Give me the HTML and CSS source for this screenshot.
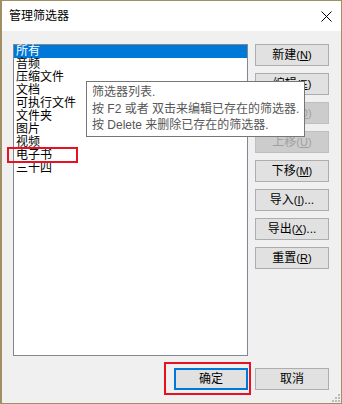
FILE: index.html
```html
<!DOCTYPE html>
<html lang="zh-CN">
<head>
	<meta charset="UTF-8">
	<title>管理筛选器</title>
	<link rel="stylesheet" href="styles.css">
</head>
<body>
	<div class="dialog">
		<div class="titlebar">
			<span class="title">管理筛选器</span>
			<svg class="close" width="11" height="11" viewBox="0 0 11 11">
				<path d="M0.5 0.5L10.5 10.5M10.5 0.5L0.5 10.5" stroke="#000" stroke-width="1" fill="none"/>
			</svg>
		</div>
		<div class="main">
			<ul class="list">
				<li class="selected">所有</li>
				<li>音频</li>
				<li>压缩文件</li>
				<li>文档</li>
				<li>可执行文件</li>
				<li>文件夹</li>
				<li>图片</li>
				<li>视频</li>
				<li>电子书</li>
				<li>三十四</li>
			</ul>
			<div class="side">
				<button class="btn">新建<span class="key">(<u>N</u>)</span></button>
				<button class="btn">编辑<span class="key">(<u>E</u>)</span></button>
				<button class="btn" disabled>删除<span class="key">(<u>D</u>)</span></button>
				<button class="btn" disabled>上移<span class="key">(<u>U</u>)</span></button>
				<button class="btn">下移<span class="key">(<u>M</u>)</span></button>
				<button class="btn">导入<span class="key">(<u>I</u>)</span>...</button>
				<button class="btn">导出<span class="key">(<u>X</u>)</span>...</button>
				<button class="btn">重置<span class="key">(<u>R</u>)</span></button>
			</div>
		</div>
		<div class="footer">
			<button class="btn default">确定</button>
			<button class="btn">取消</button>
		</div>
		<svg class="grip" width="9" height="9" viewBox="0 0 9 9">
			<rect x="7" y="1" width="2" height="2" fill="#bcbcbc"/>
			<rect x="4" y="4" width="2" height="2" fill="#bcbcbc"/>
			<rect x="7" y="4" width="2" height="2" fill="#bcbcbc"/>
			<rect x="1" y="7" width="2" height="2" fill="#bcbcbc"/>
			<rect x="4" y="7" width="2" height="2" fill="#bcbcbc"/>
			<rect x="7" y="7" width="2" height="2" fill="#bcbcbc"/>
		</svg>

		<!-- 提示框 -->
		<div class="tooltip">
			<p>筛选器列表.</p>
			<p>按 F2 或者 双击来编辑已存在的筛选器.</p>
			<p>按 Delete 来删除已存在的筛选器.</p>
		</div>

		<!-- 标注红框 -->
		<div class="mark mark-item"></div>
		<div class="mark mark-ok"></div>
	</div>
</body>
</html>
```

FILE: styles.css
```css
*{
	box-sizing: border-box;
	margin: 0;
	padding: 0;
}
body{
	font-family: "Liberation Sans", "Noto Sans CJK SC", sans-serif;
	font-size: 12px;
	color: #000;
}
.dialog{
	position: relative;
	width: 342px;
	height: 404px;
	border: 1px solid #a08e64;
	border-left-width: 2px;
	background: #f0f0f0;
	display: flex;
	flex-direction: column;
}
.titlebar{
	height: 30px;
	background: #fff;
	display: flex;
	align-items: center;
	justify-content: space-between;
	padding: 0 9px 0 7px;
}
.title{
	font-size: 12px;
	line-height: 14px;
}
.close{
	display: block;
	margin-top: 1px;
}
.main{
	display: flex;
	gap: 7px;
	padding: 13px 12px 0 11px;
}
.list{
	list-style: none;
	width: 235px;
	height: 312px;
	background: #fff;
	border: 1px solid #828790;
}
.list li{
	height: 13px;
	line-height: 13px;
	padding-left: 2px;
	font-size: 12px;
	white-space: nowrap;
}
.list .selected{
	background: #0078d7;
	color: #fff;
}
.side{
	display: flex;
	flex-direction: column;
	gap: 7px;
}
.btn{
	width: 74px;
	height: 22px;
	background: #e1e1e1;
	border: 1px solid #adadad;
	font-family: "Liberation Sans", "Noto Sans CJK SC", sans-serif;
	font-size: 12px;
	line-height: 18px;
	color: #000;
	text-align: center;
}
.btn .key{
	font-size: 11px;
}
.btn:disabled{
	background: #cccccc;
	border-color: #bfbfbf;
	color: #a0a0a0;
}
.footer{
	display: flex;
	justify-content: flex-end;
	gap: 7px;
	padding: 12px 12px 0 0;
}
.btn.default{
	border: 2px solid #0078d7;
}
.grip{
	position: absolute;
	right: 1px;
	bottom: 1px;
}
.tooltip{
	position: absolute;
	left: 84px;
	top: 80px;
	width: 219px;
	height: 56px;
	background: #fff;
	border: 1px solid #767676;
	padding: 2px 0 0 5px;
	color: #575757;
	font-size: 12px;
	line-height: 16.5px;
	white-space: nowrap;
}
.mark{
	position: absolute;
	border: 2px solid #e81123;
}
.mark-item{
	left: 5px;
	top: 146px;
	width: 71px;
	height: 16px;
}
.mark-ok{
	left: 162px;
	top: 361px;
	width: 87px;
	height: 33px;
}
```
